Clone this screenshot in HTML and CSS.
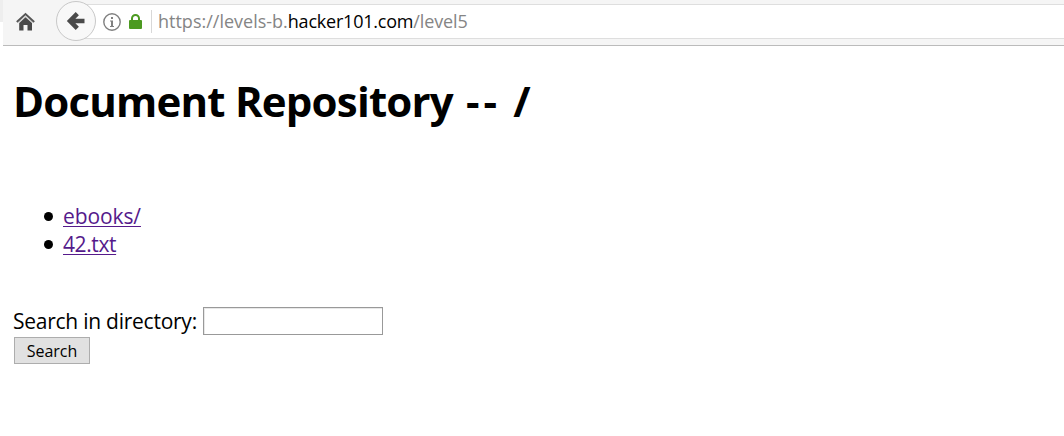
FILE: index.html
```html
<!DOCTYPE html>
<html lang="en">
<head>
<meta charset="utf-8">
<title>Document Repository</title>
<link rel="stylesheet" href="styles.css">
</head>
<body>
<header class="chrome">
  <div class="edge"></div>
  <div class="toolbar">
    <svg class="home" width="20" height="20" viewBox="0 0 20 20">
      <path d="M3.200 11 9.500 5.200 16 11v7.500h-4.500V13h-4v5.500H3.200z" fill="#4a4a4a"/>
      <path d="M.8 10 9.500 2l8.700 8" fill="none" stroke="#555" stroke-width="1.900"/>
      <path d="M2.500 10.600 9.500 4.200l7 6.400" fill="none" stroke="#b5b5b5" stroke-width=".8"/>
    </svg>
    <div class="back">
      <svg width="20" height="20" viewBox="0 0 20 20"><path d="M11.300 2.700 4 10l7.300 7.300M4 10H18.500" fill="none" stroke="#4a4a4a" stroke-width="4.500"/></svg>
    </div>
    <div class="urlbar">
      <svg class="info" width="18" height="18" viewBox="0 0 18 18"><circle cx="9" cy="9" r="8.200" fill="none" stroke="#808080" stroke-width="1.400"/><path d="M8 4h2v2H8zM7 7.500h3V13h1v1H7v-1h1V8.500H7z" fill="#808080"/></svg>
      <svg class="lock" width="13" height="15" viewBox="0 0 13 15"><path d="M3 8V4.500a3.500 3.500 0 0 1 7 0V8" fill="none" stroke="#4c9a21" stroke-width="2"/><rect y="6" width="13" height="9" rx="1" fill="#4c9a21"/></svg>
      <span class="divider"></span>
      <span class="url">https://levels-b.<span class="host">hacker101.com</span><span class="path">/level5</span></span>
    </div>
  </div>
</header>
<main class="page">
  <h1 class="title">Document Repository <span class="dashes">--</span> /</h1>
  <ul class="files">
    <li class="file"><a class="link" href="#">ebooks/</a></li>
    <li class="file"><a class="link narrow" href="#">42.txt</a></li>
  </ul>
  <form class="search">
    <label class="field"><span class="label">Search in directory:</span><input class="input" type="text"></label>
    <button class="button" type="button">Search</button>
  </form>
</main>
</body>
</html>
```
FILE: styles.css
```css
* { box-sizing: border-box; }
body { margin: 0; background: #fff; color: #000; font-family: "Open Sans", "Noto Sans", sans-serif; overflow: hidden; }
.chrome { display: flex; height: 46px; }
.edge { width: 3px; height: 22px; background: #eee; }
.toolbar { flex: 1; display: flex; background: #f5f5f5; border-bottom: 1px solid #bbb; }
.home { margin: 12px 0 0 13px; flex: none; }
.back { position: relative; z-index: 1; flex: none; display: flex; align-items: center; justify-content: center; width: 40px; height: 40px; margin: 1px 0 0 20px; border: 1px solid #c8c8c8; border-radius: 50%; background: #f8f8f8; }
.urlbar { flex: 1; display: flex; align-items: center; height: 35px; margin: 4px 0 0 -20px; padding-left: 27px; background: #fff; border: solid #dedede; border-width: 1px 0; }
.info { flex: none; }
.lock { flex: none; margin-left: 8px; }
.divider { width: 1px; height: 23px; margin-left: 9px; background: #d8d8d8; }
.url { margin-left: 6px; padding-bottom: 2px; font-size: 18px; line-height: 24px; white-space: nowrap; color: #858585; }
.host { color: #000; letter-spacing: -.22px; }
.path { letter-spacing: -.1px; }
.page { padding: 27px 13px 0; }
.title { margin: 0; font-size: 42px; line-height: 56px; font-weight: 700; letter-spacing: -.8px; white-space: nowrap; }
.dashes { margin: 0 2px 0 3px; letter-spacing: 4px; }
.files { margin: 73px 0 0; padding: 0; list-style: none; font-size: 21px; line-height: 28px; }
.file { display: flex; align-items: center; padding-left: 31px; }
.file::before { content: ""; width: 9px; height: 9px; margin-right: 10px; border-radius: 50%; background: #000; }
.link { color: #551a8b; letter-spacing: -.1px; text-decoration: underline; text-decoration-thickness: 1px; text-underline-offset: 2px; }
.narrow { letter-spacing: -.4px; }
.search { margin-top: 49px; }
.field { display: flex; align-items: center; height: 28px; font-size: 21px; }
.label { width: 190px; padding-bottom: 1px; letter-spacing: -.25px; white-space: nowrap; }
.input { width: 180px; height: 28px; padding: 0; border: 1px solid #999; border-radius: 0; background: #fff; box-shadow: inset 1px 1px #e8e8e8; }
.button { display: block; width: 76px; height: 27px; margin: 2px 0 0 1px; padding: 0; border: 1px solid #adadad; border-radius: 0; background: #e1e1e1; color: #000; font: 16px/24px "Open Sans", "Noto Sans", sans-serif; }
```
